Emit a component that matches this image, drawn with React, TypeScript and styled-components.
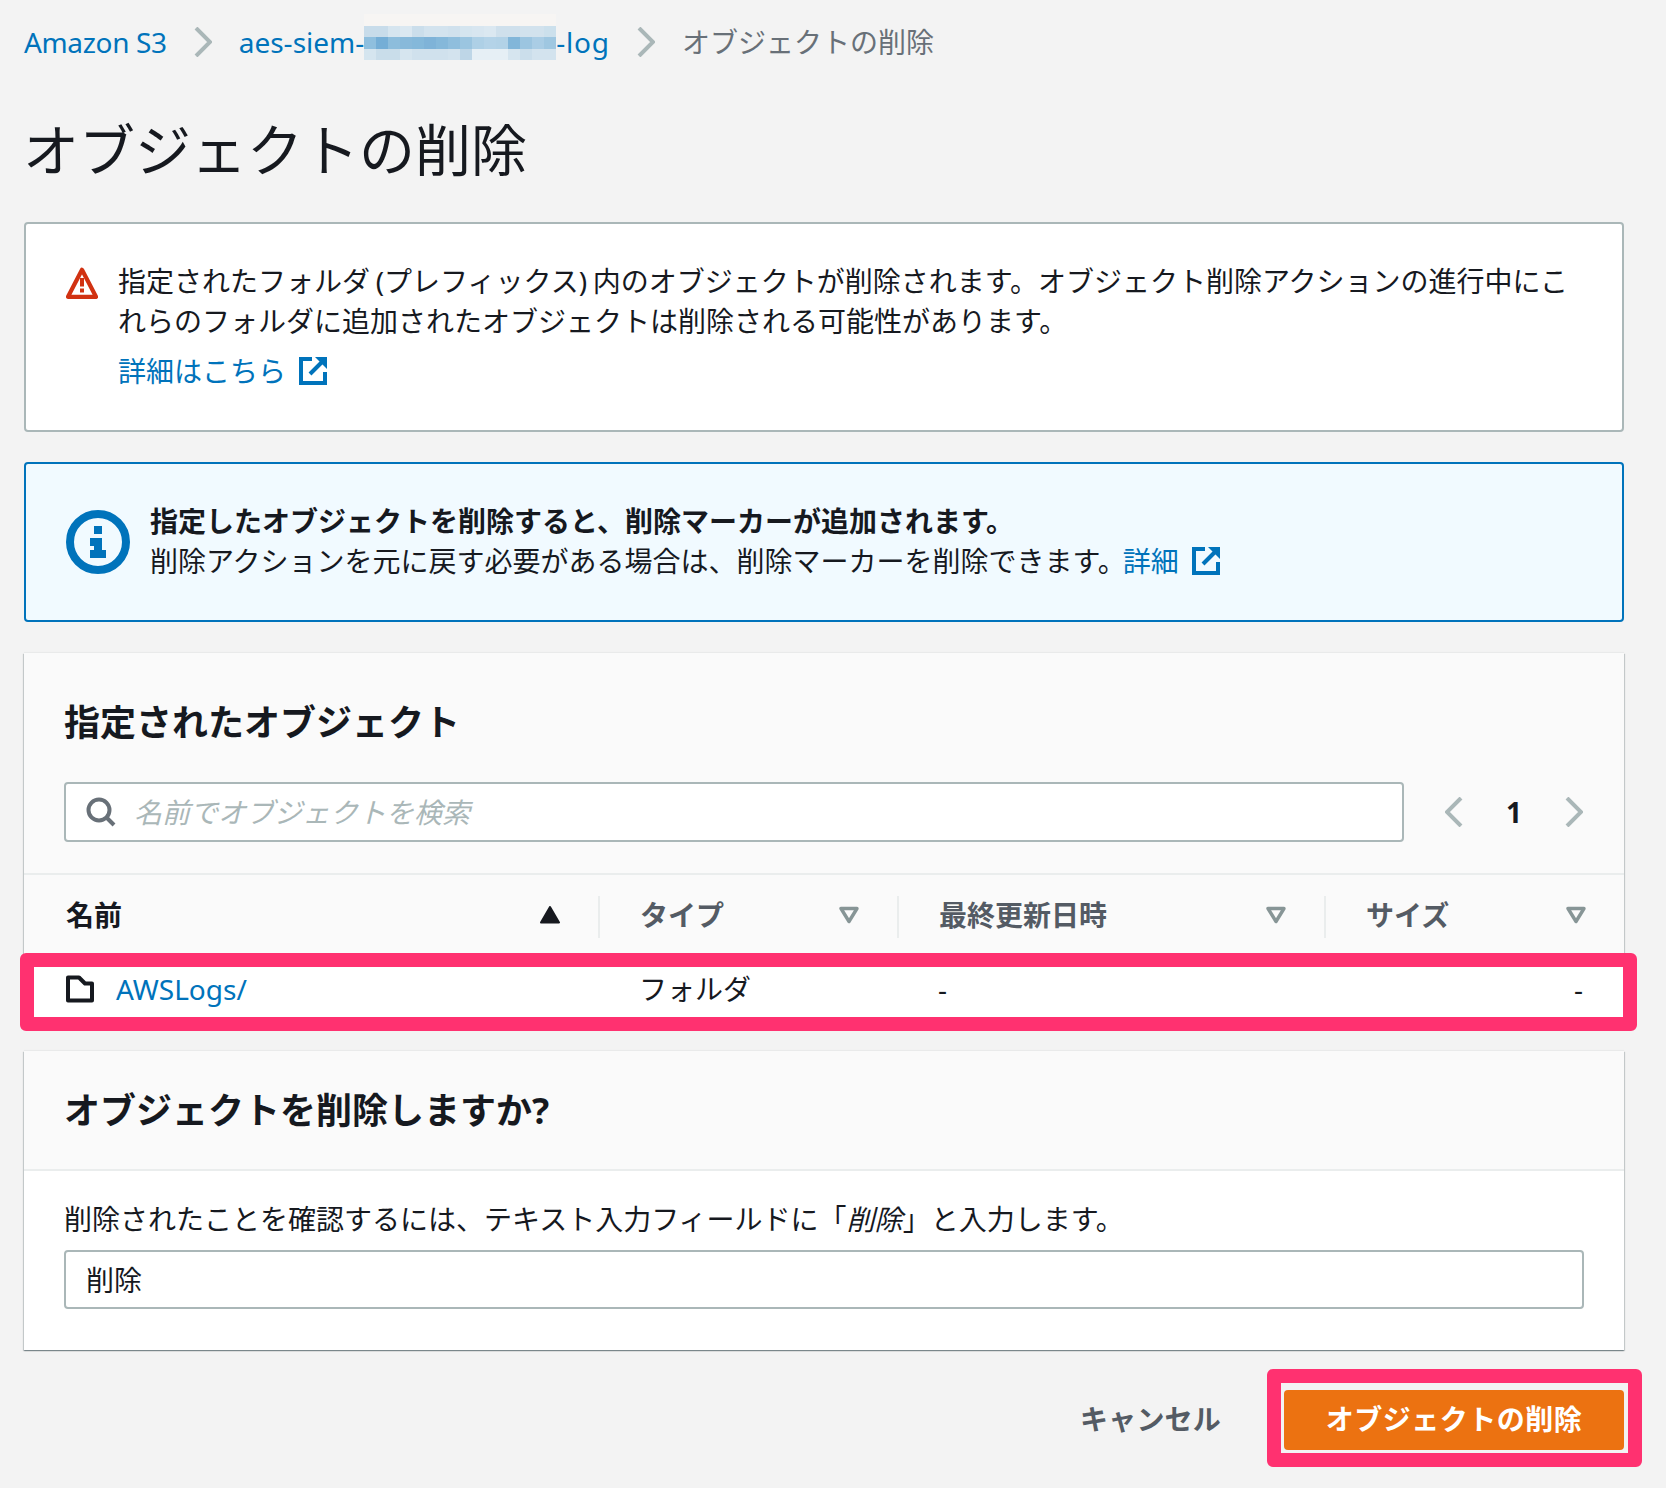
import React from "react";
import styled, { createGlobalStyle } from "styled-components";

const fontStack = `"Noto Sans", "Noto Sans CJK JP", sans-serif`;

const GlobalStyle = createGlobalStyle`
  * {
    box-sizing: border-box;
  }

  body {
    margin: 0;
    background: #f3f3f3;
    color: #16191f;
    font-family: ${fontStack};
    font-size: 28px;
    line-height: 40px;
  }
`;

const Page = styled.div`
  width: 1666px;
  min-height: 1488px;
  padding: 0 42px 0 24px;
`;

const Breadcrumbs = styled.nav`
  display: flex;
  align-items: center;
  gap: 27px;
  height: 84px;
`;

const Crumb = styled.a<{ $tight?: boolean }>`
  display: flex;
  align-items: center;
  color: #0073bb;
  text-decoration: none;
  letter-spacing: ${(p) => (p.$tight ? "-0.35px" : "0")};
`;

const LogSuffix = styled.span`
  letter-spacing: 0.8px;
`;

const CurrentCrumb = styled.span`
  color: #687078;
`;

const Mosaic = styled.span`
  display: grid;
  grid-template-columns: repeat(16, 12px);
  grid-auto-rows: 11.5px;
  margin-bottom: 10px;
`;

const MosaicCell = styled.span<{ $color: string }>`
  background: ${(p) => p.$color};
`;

const Title = styled.h1`
  margin: 33px 0 41px -1px;
  font-size: 56px;
  line-height: 64px;
  font-weight: 400;
  color: #16191f;
`;

const Alert = styled.div<{ $info?: boolean }>`
  display: flex;
  align-items: ${(p) => (p.$info ? "center" : "flex-start")};
  gap: 20px;
  height: ${(p) => (p.$info ? "160px" : "210px")};
  margin-bottom: ${(p) => (p.$info ? "31px" : "30px")};
  padding: ${(p) => (p.$info ? "0 40px" : "37px 40px 0")};
  background: ${(p) => (p.$info ? "#f1faff" : "#fff")};
  border: 2px solid ${(p) => (p.$info ? "#0073bb" : "#aab7b8")};
  border-radius: 4px;
`;

const WarningIcon = styled.svg`
  flex: none;
  width: 32px;
  height: 32px;
  margin-top: 6px;
`;

const InfoIcon = styled.svg`
  flex: none;
  width: 64px;
  height: 64px;
`;

const AlertBody = styled.div<{ $info?: boolean }>`
  flex: 1;
  min-width: 0;
  padding-bottom: ${(p) => (p.$info ? "2px" : "0")};
  word-spacing: -1.6px;
`;

const BoldLine = styled.div`
  font-weight: 700;
`;

const DocLink = styled.a<{ $block?: boolean }>`
  display: ${(p) => (p.$block ? "flex" : "inline-flex")};
  align-items: center;
  gap: 13px;
  margin-top: ${(p) => (p.$block ? "10px" : "0")};
  margin-left: ${(p) => (p.$block ? "0" : "-3px")};
  color: #0073bb;
  text-decoration: none;
  vertical-align: top;
`;

const ExternalSvg = styled.svg`
  flex: none;
  width: 28px;
  height: 28px;
`;

const Card = styled.section`
  margin-bottom: 32px;
  background: #fafafa;
  box-shadow: 0 1px 1px 0 rgba(0, 28, 36, 0.3), 1px 1px 1px 0 rgba(0, 28, 36, 0.15),
    -1px 1px 1px 0 rgba(0, 28, 36, 0.15), 0 -1px 1px 0 rgba(0, 28, 36, 0.04);
`;

const CardTitle = styled.h2`
  margin: 0;
  font-size: 36px;
  line-height: 48px;
  font-weight: 700;
  color: #16191f;
`;

const ObjectsHead = styled.div`
  padding: 46px 41px 31px 40px;
  border-bottom: 2px solid #eaeded;
`;

const Toolbar = styled.div`
  display: flex;
  align-items: center;
  margin-top: 35px;
`;

const SearchBox = styled.label`
  flex: 1;
  display: flex;
  align-items: center;
  gap: 18px;
  height: 60px;
  padding-left: 20px;
  background: #fff;
  border: 2px solid #aab7b8;
  border-radius: 4px;
`;

const SearchInput = styled.input`
  flex: 1;
  border: 0;
  outline: 0;
  padding: 0;
  background: transparent;
  font-family: ${fontStack};
  font-size: 28px;
  color: #16191f;

  &::placeholder {
    color: #aab7b8;
    font-style: italic;
    opacity: 1;
  }
`;

const Pager = styled.div`
  display: flex;
  align-items: center;
  justify-content: space-between;
  width: 138px;
  margin-left: 41px;
`;

const PageNumber = styled.span`
  font-weight: 700;
  color: #16191f;
`;

const TableHead = styled.div`
  display: grid;
  grid-template-columns: 574px 299px 427px 1fr;
  padding: 21px 0 22px;
`;

const HeadCell = styled.div<{ $first?: boolean; $active?: boolean }>`
  display: flex;
  align-items: center;
  justify-content: space-between;
  height: 42px;
  padding: 0 38px 4px ${(p) => (p.$first ? "42px" : "40px")};
  border-left: ${(p) => (p.$first ? "0" : "2px solid #eaeded")};
  font-weight: 700;
  color: ${(p) => (p.$active ? "#16191f" : "#545b64")};
`;

const Row = styled.div`
  position: relative;
  display: grid;
  grid-template-columns: 574px 299px 427px 1fr;
  align-items: center;
  height: 59px;
  padding-bottom: 2px;
  background: #fff;

  &::after {
    content: "";
    position: absolute;
    top: -7px;
    right: -13px;
    bottom: -12px;
    left: -4px;
    border: 14px solid #ff3170;
    border-radius: 6px;
    pointer-events: none;
  }
`;

const NameCell = styled.div`
  display: flex;
  align-items: center;
  gap: 21px;
  padding-left: 41px;
`;

const Cell = styled.div<{ $end?: boolean }>`
  padding: 0 41px 0 ${(p) => (p.$end ? "40px" : "41px")};
  text-align: ${(p) => (p.$end ? "right" : "left")};
`;

const ObjectLink = styled.a`
  color: #0073bb;
  text-decoration: none;
`;

const ConfirmHead = styled.div`
  display: flex;
  align-items: center;
  height: 120px;
  padding: 2px 40px 0;
  border-bottom: 2px solid #eaeded;
`;

const ConfirmBody = styled.div`
  padding: 28px 40px 41px;
  background: #fff;
`;

const ConfirmLabel = styled.label`
  display: block;
  margin-bottom: 11px;
`;

const ConfirmInput = styled.input`
  display: block;
  width: 100%;
  height: 59px;
  padding: 0 20px 2px;
  background: #fff;
  border: 2px solid #aab7b8;
  border-radius: 4px;
  outline: 0;
  font-family: ${fontStack};
  font-size: 28px;
  color: #16191f;
`;

const Actions = styled.div`
  display: flex;
  align-items: center;
  justify-content: flex-end;
  gap: 63px;
  padding-top: 8px;
`;

const CancelButton = styled.button`
  padding: 0 0 4px;
  border: 0;
  background: none;
  font-family: ${fontStack};
  font-size: 28px;
  font-weight: 700;
  letter-spacing: 0.2px;
  color: #545b64;
`;

const DeleteWrap = styled.div`
  position: relative;

  &::after {
    content: "";
    position: absolute;
    inset: -21px -18px -17px -17px;
    border: 14px solid #ff3170;
    border-radius: 6px;
    pointer-events: none;
  }
`;

const DeleteButton = styled.button`
  display: block;
  width: 340px;
  height: 60px;
  padding: 0 0 4px;
  background: #ec7211;
  border: 0;
  border-radius: 4px;
  font-family: ${fontStack};
  font-size: 28px;
  font-weight: 700;
  letter-spacing: 0.5px;
  color: #fff;
`;

const Chevron = styled.svg`
  flex: none;
  width: 18px;
  height: 30px;
  fill: none;
  stroke: #aab7b8;
  stroke-width: 4px;
`;

const ChevronRight = () => (
  <Chevron viewBox="0 0 18 30">
    <path d="M2 1l14 14L2 29" />
  </Chevron>
);

const ChevronLeft = () => (
  <Chevron viewBox="0 0 18 30">
    <path d="M16 1L2 15l14 14" />
  </Chevron>
);

const ExternalIcon = () => (
  <ExternalSvg viewBox="0 0 28 28">
    <path d="M13 2H2v24h24V15" fill="none" stroke="#0073bb" strokeWidth="4" />
    <path d="M11 17L24 4" fill="none" stroke="#0073bb" strokeWidth="4" />
    <path d="M16 0h12v12z" fill="#0073bb" />
  </ExternalSvg>
);

const SortIcon = ({ active }: { active?: boolean }) =>
  active ? (
    <svg width="20" height="18" viewBox="0 0 20 18">
      <path d="M10 1L19 16.500H1Z" fill="#16191f" stroke="#16191f" strokeWidth="2" strokeLinejoin="round" />
    </svg>
  ) : (
    <svg width="20" height="18" viewBox="0 0 20 18">
      <path d="M2 2.500H18L10 15.500Z" fill="none" stroke="#879596" strokeWidth="3.400" strokeLinejoin="round" />
    </svg>
  );

const mosaicRows = [
  Array(16).fill("#f7f5f3"),
  ["#c8dcea", "#c8dcea", "#d6e5ef", "#dbe8f1", "#cbdeeb", "#d3e3ee", "#d3e3ee", "#d0e1ed", "#d5e5ef", "#d8e6f0", "#dbe8f1", "#cfe0ec", "#cfe0ec", "#d2e2ed", "#d2e2ed", "#cce0ec"],
  ["#8fbfde", "#75aed6", "#8dbddc", "#88b9da", "#84b8da", "#7fb3d8", "#85b8da", "#8fbedd", "#9bc5e0", "#aed0e6", "#b4d3e8", "#b2d2e7", "#82b6d9", "#9cc5e0", "#aacde5", "#9fc7e1"],
  ["#d5e5ef", "#c9ddea", "#c9ddea", "#d6e5ef", "#d0e1ed", "#d0e1ed", "#d0e1ed", "#d3e3ee", "#bed6e7", "#e6eff5", "#e6eff5", "#e6eff5", "#d6e5ef", "#cbdeeb", "#d3e3ee", "#d3e3ee"],
];

const App: React.FC = () => {
  return (
    <Page>
      <GlobalStyle />

      <Breadcrumbs>
        <Crumb href="#" $tight>
          Amazon S3
        </Crumb>
        <ChevronRight />
        <Crumb href="#">
          aes-siem-
          <Mosaic>
            {mosaicRows.flat().map((c, i) => (
              <MosaicCell key={i} $color={c} />
            ))}
          </Mosaic>
          <LogSuffix>-log</LogSuffix>
        </Crumb>
        <ChevronRight />
        <CurrentCrumb>オブジェクトの削除</CurrentCrumb>
      </Breadcrumbs>

      <Title>オブジェクトの削除</Title>

      <Alert>
        <WarningIcon viewBox="0 0 32 32">
          <path d="M16 2.800L30 29.800H2Z" fill="#fff" stroke="#d13212" strokeWidth="4.200" strokeLinejoin="round" />
          <path d="M14 11h4v8.500h-4zM14 21.500h4v4h-4z" fill="#d13212" />
        </WarningIcon>
        <AlertBody>
          <div>
            指定されたフォルダ (プレフィックス) 内のオブジェクトが削除されます。オブジェクト削除アクションの進行中にこれらのフォルダに追加されたオブジェクトは削除される可能性があります。
          </div>
          <DocLink href="#" $block>
            詳細はこちら
            <ExternalIcon />
          </DocLink>
        </AlertBody>
      </Alert>

      <Alert $info>
        <InfoIcon viewBox="0 0 64 64">
          <circle cx="32" cy="32" r="28" fill="none" stroke="#0073bb" strokeWidth="8" />
          <path d="M28 16h8v8h-8zM24 28h12v12h4v8H24v-8h4v-4h-4z" fill="#0073bb" />
        </InfoIcon>
        <AlertBody $info>
          <BoldLine>指定したオブジェクトを削除すると、削除マーカーが追加されます。</BoldLine>
          <div>
            削除アクションを元に戻す必要がある場合は、削除マーカーを削除できます。
            <DocLink href="#">
              詳細
              <ExternalIcon />
            </DocLink>
          </div>
        </AlertBody>
      </Alert>

      <Card>
        <ObjectsHead>
          <CardTitle>指定されたオブジェクト</CardTitle>
          <Toolbar>
            <SearchBox>
              <svg width="30" height="30" viewBox="0 0 30 30" fill="none" stroke="#687078" strokeWidth="4">
                <circle cx="13" cy="13" r="10.500" />
                <path d="M20.500 20.500L28 28" />
              </svg>
              <SearchInput placeholder="名前でオブジェクトを検索" />
            </SearchBox>
            <Pager>
              <ChevronLeft />
              <PageNumber>1</PageNumber>
              <ChevronRight />
            </Pager>
          </Toolbar>
        </ObjectsHead>

        <TableHead>
          <HeadCell $first $active>
            名前
            <SortIcon active />
          </HeadCell>
          <HeadCell>
            タイプ
            <SortIcon />
          </HeadCell>
          <HeadCell>
            最終更新日時
            <SortIcon />
          </HeadCell>
          <HeadCell>
            サイズ
            <SortIcon />
          </HeadCell>
        </TableHead>

        <Row>
          <NameCell>
            <svg width="30" height="28" viewBox="0 0 30 28" fill="none" stroke="#16191f" strokeWidth="4" strokeLinejoin="round">
              <path d="M3 2.500H14L20 8.500H27V25.500H3Z" />
            </svg>
            <ObjectLink href="#">AWSLogs/</ObjectLink>
          </NameCell>
          <Cell>フォルダ</Cell>
          <Cell>-</Cell>
          <Cell $end>-</Cell>
        </Row>
      </Card>

      <Card>
        <ConfirmHead>
          <CardTitle>オブジェクトを削除しますか?</CardTitle>
        </ConfirmHead>
        <ConfirmBody>
          <ConfirmLabel>
            削除されたことを確認するには、テキスト入力フィールドに「<i>削除</i>」と入力します。
          </ConfirmLabel>
          <ConfirmInput readOnly value="削除" />
        </ConfirmBody>
      </Card>

      <Actions>
        <CancelButton>キャンセル</CancelButton>
        <DeleteWrap>
          <DeleteButton>オブジェクトの削除</DeleteButton>
        </DeleteWrap>
      </Actions>
    </Page>
  );
};

export default App;
